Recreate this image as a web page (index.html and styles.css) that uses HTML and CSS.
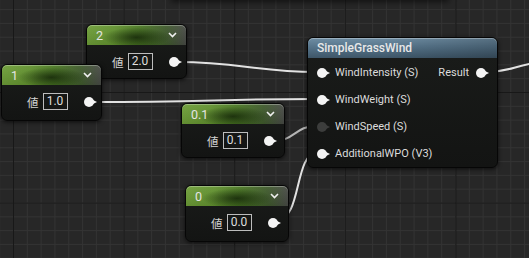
FILE: index.html
```html
<!DOCTYPE html>
<html lang="ja">
<head>
  <meta charset="UTF-8">
  <title>SimpleGrassWind</title>
  <link rel="stylesheet" href="styles.css">
</head>
<body>
  <div class="graph">
    <div class="offscreen-node"></div>

    <svg class="wires" width="529" height="258" viewBox="0 0 529 258">
      <path class="wire" d="M177 62 C240 62, 255 72, 317 72"/>
      <path class="wire" d="M93 102 C200 102, 225 99, 317 99"/>
      <path class="wire wire-dim" d="M272 141 C296 141, 294 126, 317 126"/>
      <path class="wire" d="M277 220 C302 220, 294 153, 317 153"/>
      <path class="wire" d="M486 72 C510 72, 512 66, 540 62"/>
    </svg>

    <!-- constant nodes -->
    <div class="node const" style="left: 86px; top: 24px;">
      <div class="node-header green">
        <span class="title">2</span>
        <svg class="chevron" width="9" height="6" viewBox="0 0 9 6"><polyline points="1,1 4.5,4.5 8,1"/></svg>
      </div>
      <div class="value-row">
        <span class="label">値</span>
        <span class="value-box">2.0</span>
        <span class="pin"></span>
      </div>
    </div>

    <div class="node const" style="left: 1px; top: 64px; height: 57px;">
      <div class="node-header green">
        <span class="title">1</span>
        <svg class="chevron" width="9" height="6" viewBox="0 0 9 6"><polyline points="1,1 4.5,4.5 8,1"/></svg>
      </div>
      <div class="value-row">
        <span class="label">値</span>
        <span class="value-box">1.0</span>
        <span class="pin"></span>
      </div>
    </div>

    <div class="node const wide" style="left: 181px; top: 103px;">
      <div class="node-header green">
        <span class="title">0.1</span>
        <svg class="chevron" width="9" height="6" viewBox="0 0 9 6"><polyline points="1,1 4.5,4.5 8,1"/></svg>
      </div>
      <div class="value-row">
        <span class="label">値</span>
        <span class="value-box">0.1</span>
        <span class="pin"></span>
      </div>
    </div>

    <div class="node const wide" style="left: 185px; top: 185px; height: 57px;">
      <div class="node-header green">
        <span class="title">0</span>
        <svg class="chevron" width="9" height="6" viewBox="0 0 9 6"><polyline points="1,1 4.5,4.5 8,1"/></svg>
      </div>
      <div class="value-row">
        <span class="label">値</span>
        <span class="value-box">0.0</span>
        <span class="pin"></span>
      </div>
    </div>

    <!-- material function call -->
    <div class="node function" style="left: 307px; top: 37px;">
      <div class="node-header blue">
        <span class="title">SimpleGrassWind</span>
      </div>
      <div class="pin-list">
        <div class="pin-row">
          <span class="pin"></span>
          <span class="pin-name">WindIntensity (S)</span>
          <span class="output">
            <span class="pin-name">Result</span>
            <span class="pin"></span>
          </span>
        </div>
        <div class="pin-row">
          <span class="pin"></span>
          <span class="pin-name">WindWeight (S)</span>
        </div>
        <div class="pin-row">
          <span class="pin pin-off"></span>
          <span class="pin-name">WindSpeed (S)</span>
        </div>
        <div class="pin-row">
          <span class="pin"></span>
          <span class="pin-name">AdditionalWPO (V3)</span>
        </div>
      </div>
    </div>
  </div>
</body>
</html>
```

FILE: styles.css
```css
body {
  margin: 0;
  background-color: #272727;
  font-family: Roboto, "Liberation Sans", "Noto Sans CJK JP", sans-serif;
}

.graph {
  position: relative;
  width: 529px;
  height: 258px;
  overflow: hidden;
  background-color: #272727;
  background-image:
    linear-gradient(to right, #181818 1px, transparent 1px),
    linear-gradient(to bottom, #181818 1px, transparent 1px),
    linear-gradient(to right, #333333 1px, transparent 1px),
    linear-gradient(to bottom, #333333 1px, transparent 1px);
  background-size: 110.6px 110.6px, 110.6px 110.6px, 13.825px 13.825px, 13.825px 13.825px;
  background-position: 13px 92px;
}

.offscreen-node {
  position: absolute;
  left: 172px;
  top: -40px;
  width: 276px;
  height: 40px;
  box-shadow: 0 1px 6px 1px rgba(0, 0, 0, 0.55);
}

.wires {
  position: absolute;
  left: 0;
  top: 0;
}

.wire {
  fill: none;
  stroke: #e2e2e2;
  stroke-width: 2;
}

.wire-dim {
  stroke: #b4b4b4;
}

.node {
  position: absolute;
  box-sizing: border-box;
  background: linear-gradient(to bottom, #1a1c1a, #131413);
  border: 1px solid #060606;
  border-radius: 6px;
  box-shadow: 0 1px 4px rgba(0, 0, 0, 0.7);
  color: #dcdcdc;
}

.node-header {
  display: flex;
  align-items: center;
  height: 20px;
  padding: 0 9px;
  border-radius: 5px 5px 0 0;
  box-shadow: inset 0 1px 0 rgba(255, 255, 255, 0.3);
  font-size: 12px;
}

.node-header .title {
  flex: 1;
  color: #e4e4e4;
}

.const .title {
  font-size: 12.5px;
}

.green {
  background:
    radial-gradient(ellipse 34% 50% at 50% 62%, rgba(22, 40, 10, 0.85), transparent),
    linear-gradient(to bottom, rgba(255, 255, 255, 0.06), rgba(0, 0, 0, 0.1)),
    linear-gradient(to right, #6e9e38 0%, #62922f 28%, #4a7822 52%, #3f5a2c 80%, #484a46 100%);
}

.blue {
  background:
    linear-gradient(to right, rgba(0, 0, 0, 0) 40%, rgba(0, 0, 0, 0.2) 100%),
    linear-gradient(to bottom, #6f8ea4 0%, #56748a 45%, #3e5668 100%);
}

.blue .title {
  font-weight: 500;
  font-size: 12px;
  color: #e8e8e8;
}

.chevron polyline {
  fill: none;
  stroke: #f0f0f0;
  stroke-width: 1.6;
}

.const {
  width: 101px;
  height: 55px;
}

.const.wide {
  width: 104px;
}

.value-row {
  display: flex;
  align-items: center;
  height: 33px;
  padding-left: 25px;
}

.label {
  font-family: "Noto Sans CJK JP", sans-serif;
  font-size: 11.5px;
  color: #d4d4d4;
}

.value-box {
  box-sizing: border-box;
  width: 25px;
  height: 17px;
  margin-left: 4px;
  border: 1px solid #bdbdbd;
  font-size: 12px;
  line-height: 15px;
  text-align: center;
  color: #dedede;
}

.pin {
  position: relative;
  flex: none;
  width: 10px;
  height: 10px;
  border-radius: 50%;
  background: #f4f4f4;
}

.pin::after {
  content: '';
  position: absolute;
  right: -3px;
  top: 3px;
  border-left: 4px solid #f4f4f4;
  border-top: 2px solid transparent;
  border-bottom: 2px solid transparent;
}

.value-row .pin {
  margin-left: 16px;
}

.pin-off {
  background: #3c3d3c;
}

.pin-off::after {
  border-left-color: #3c3d3c;
}

.function {
  width: 191px;
  height: 131px;
}

.pin-list {
  padding-top: 1px;
}

.pin-row {
  display: flex;
  align-items: center;
  gap: 8px;
  height: 27px;
  padding: 0 11px 0 9px;
  font-size: 11px;
}

.pin-name {
  color: #dcdcdc;
}

.output {
  display: flex;
  align-items: center;
  gap: 7px;
  margin-left: auto;
}
```
